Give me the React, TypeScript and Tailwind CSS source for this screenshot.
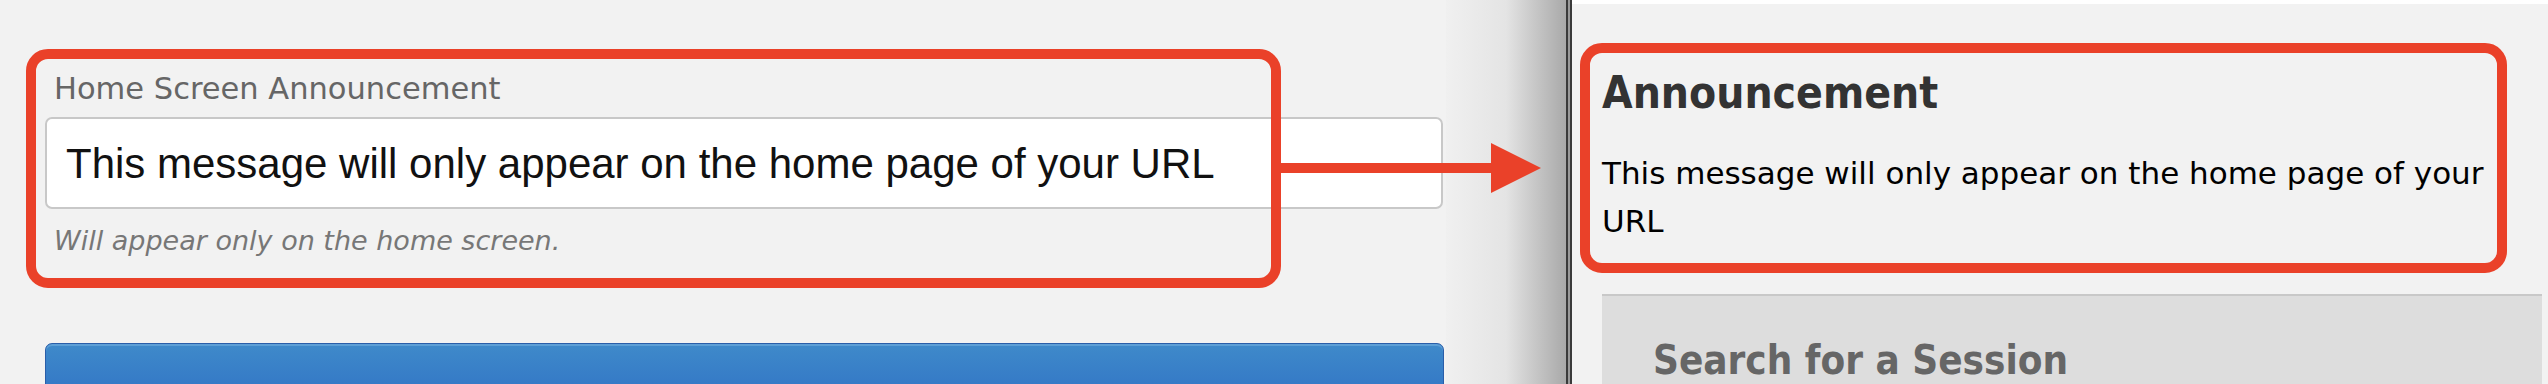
const ui = { fontFamily: '"DejaVu Sans", "Open Sans", sans-serif' };
const uiBold = { fontFamily: '"DejaVu Sans Condensed", "Open Sans", sans-serif' };
const helv = { fontFamily: '"Liberation Sans", Arial, sans-serif' };

function Arrow() {
  return (
    <svg
      className="absolute left-[1276px] top-[140px]"
      width="270"
      height="56"
      viewBox="0 0 270 56"
    >
      <rect x="0" y="23" width="220" height="10" fill="#ea4129" />
      <polygon points="215,3 265,28 215,53" fill="#ea4129" />
    </svg>
  );
}

export default function App() {
  return (
    <div
      className="relative flex h-[384px] w-[2548px] overflow-hidden bg-[#f2f2f2]"
      style={ui}
    >
      {/* admin form */}
      <div className="flex w-[1446px] shrink-0 flex-col pl-[45px] pt-[71px]">
        <label className="shrink-0 pl-[9px] text-[30.5px] leading-[36px] text-[#666]">
          Home Screen Announcement
        </label>
        <div
          className="mt-[10px] flex h-[92px] w-[1398px] shrink-0 items-center rounded-[7px] border-2 border-[#c8c8c8] bg-white px-[19px] text-[42px] text-[#111]"
          style={helv}
        >
          This message will only appear on the home page of your URL
        </div>
        <p className="mt-[16px] shrink-0 pl-[9px] text-[27px] leading-[32px] italic text-[#777]">
          Will appear only on the home screen.
        </p>
        <div className="mt-[86px] h-[80px] w-[1399px] shrink-0 rounded-t-[7px] border border-[#2a5ea9] bg-gradient-to-b from-[#3f8aca] to-[#2d6bc3] shadow-[inset_0_2px_0_#5d9fd6]" />
      </div>

      {/* window shadow + divider */}
      <div className="w-[120px] shrink-0 bg-gradient-to-r from-[#f0f0f0] via-[#e4e4e4] to-[#a9a9a9]" />
      <div className="w-[6px] shrink-0 border-x-2 border-x-[#3a3a3a] bg-[#9a9a9a]" />

      {/* preview */}
      <div className="flex flex-1 flex-col border-t-4 border-t-white pl-[30px] pr-[6px] pt-[63px]">
        <h2
          className="shrink-0 text-[44px] font-bold leading-[52px] text-[#333]"
          style={uiBold}
        >
          Announcement
        </h2>
        <p className="mt-[30px] w-[940px] shrink-0 text-[31px] leading-[48px] text-black">
          This message will only appear on the home page of your URL
        </p>
        <div className="mt-[49px] flex-1 shrink-0 border-t-2 border-t-[#c8c8c8] bg-[#dddddd] pl-[51px] pt-[40px]">
          <h3
            className="text-[40px] font-bold leading-[48px] text-[#666]"
            style={uiBold}
          >
            Search for a Session
          </h3>
        </div>
      </div>

      {/* annotations */}
      <div className="absolute left-[26px] top-[49px] h-[239px] w-[1255px] rounded-[22px] border-[10px] border-[#ea4129]" />
      <div className="absolute left-[1580px] top-[43px] h-[230px] w-[927px] rounded-[22px] border-[10px] border-[#ea4129]" />
      <Arrow />
    </div>
  );
}
